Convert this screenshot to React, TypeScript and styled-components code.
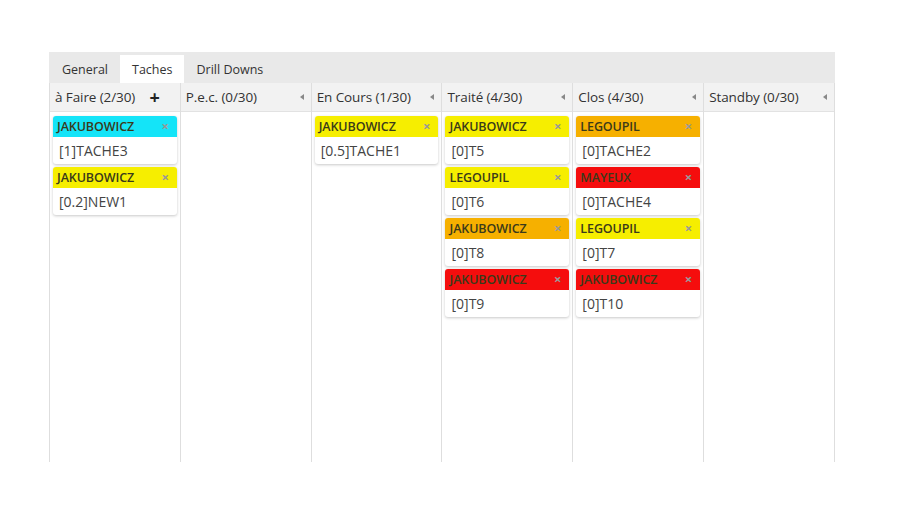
import React from 'react';
import styled, { createGlobalStyle } from 'styled-components';

type Card = { who: string; color: string; task: string };
type Column = { title: string; action: 'add' | 'collapse'; cards: Card[] };

const CYAN = '#14e4f8';
const YELLOW = '#f6ee00';
const ORANGE = '#f6b000';
const RED = '#f50d0d';

const columns: Column[] = [
  {
    title: 'à Faire (2/30)',
    action: 'add',
    cards: [
      { who: 'JAKUBOWICZ', color: CYAN, task: '[1]TACHE3' },
      { who: 'JAKUBOWICZ', color: YELLOW, task: '[0.2]NEW1' },
    ],
  },
  { title: 'P.e.c. (0/30)', action: 'collapse', cards: [] },
  {
    title: 'En Cours (1/30)',
    action: 'collapse',
    cards: [{ who: 'JAKUBOWICZ', color: YELLOW, task: '[0.5]TACHE1' }],
  },
  {
    title: 'Traité (4/30)',
    action: 'collapse',
    cards: [
      { who: 'JAKUBOWICZ', color: YELLOW, task: '[0]T5' },
      { who: 'LEGOUPIL', color: YELLOW, task: '[0]T6' },
      { who: 'JAKUBOWICZ', color: ORANGE, task: '[0]T8' },
      { who: 'JAKUBOWICZ', color: RED, task: '[0]T9' },
    ],
  },
  {
    title: 'Clos (4/30)',
    action: 'collapse',
    cards: [
      { who: 'LEGOUPIL', color: ORANGE, task: '[0]TACHE2' },
      { who: 'MAYEUX', color: RED, task: '[0]TACHE4' },
      { who: 'LEGOUPIL', color: YELLOW, task: '[0]T7' },
      { who: 'JAKUBOWICZ', color: RED, task: '[0]T10' },
    ],
  },
  { title: 'Standby (0/30)', action: 'collapse', cards: [] },
];

const tabs = ['General', 'Taches', 'Drill Downs'];

export default function App() {
  return (
    <>
      <GlobalStyle />
      <Board>
        <TabBar>
          {tabs.map((t) => (
            <Tab key={t} $active={t === 'Taches'}>
              {t}
            </Tab>
          ))}
        </TabBar>
        <Columns>
          {columns.map((col) => (
            <Lane key={col.title}>
              <LaneHeader>
                <LaneTitle>{col.title}</LaneTitle>
                {col.action === 'add' ? <AddIcon>+</AddIcon> : <CollapseIcon />}
              </LaneHeader>
              <LaneBody>
                {col.cards.map((c, i) => (
                  <TaskCard key={i}>
                    <CardHead $color={c.color}>
                      <Owner>{c.who}</Owner>
                      <Close>×</Close>
                    </CardHead>
                    <CardBody>{c.task}</CardBody>
                  </TaskCard>
                ))}
              </LaneBody>
            </Lane>
          ))}
        </Columns>
      </Board>
    </>
  );
}

const GlobalStyle = createGlobalStyle`
  html, body {
    margin: 0;
    background: #ffffff;
  }
  body {
    font-family: 'Open Sans', 'DejaVu Sans', sans-serif;
    color: #333;
  }
`;

const Board = styled.div`
  width: 786px;
  margin: 52px 0 0 49px;
  display: flex;
  flex-direction: column;
`;

const TabBar = styled.div`
  display: flex;
  height: 31px;
  background: #e9e9e9;
  padding: 3px 0 0 1px;
  box-sizing: border-box;
  align-items: stretch;
`;

const Tab = styled.div<{ $active?: boolean }>`
  display: flex;
  align-items: center;
  padding: 0 12px;
  font-size: 12.5px;
  color: #333;
  background: ${({ $active }) => ($active ? '#ffffff' : 'transparent')};
`;

const Columns = styled.div`
  display: grid;
  grid-template-columns: repeat(6, 1fr);
  height: 379px;
  border-left: 1px solid #dedede;
`;

const Lane = styled.div`
  display: flex;
  flex-direction: column;
  border-right: 1px solid #dedede;
  min-width: 0;
`;

const LaneHeader = styled.div`
  height: 29px;
  display: flex;
  align-items: center;
  justify-content: space-between;
  padding: 0 7px 0 5px;
  background: #f2f2f2;
  border-bottom: 1px solid #e2e2e2;
  box-sizing: border-box;
`;

const LaneTitle = styled.span`
  font-size: 13.5px;
  color: #333;
  white-space: nowrap;
  letter-spacing: -0.1px;
`;

const AddIcon = styled.span`
  font-size: 18px;
  font-weight: 700;
  line-height: 1;
  color: #222;
  margin-right: 13px;
`;

const CollapseIcon = styled.span`
  width: 0;
  height: 0;
  border-top: 3px solid transparent;
  border-bottom: 3px solid transparent;
  border-right: 4px solid #888;
`;

const LaneBody = styled.div`
  flex: 1;
  background: #fff;
  padding: 4px 3px 0 3px;
  display: flex;
  flex-direction: column;
  gap: 3px;
`;

const TaskCard = styled.div`
  display: flex;
  flex-direction: column;
  background: #fff;
  border-radius: 3px;
  box-shadow: 0 1px 3px rgba(0, 0, 0, 0.22);
`;

const CardHead = styled.div<{ $color: string }>`
  height: 21px;
  display: flex;
  align-items: center;
  justify-content: space-between;
  padding: 0 8px 0 4px;
  background: ${({ $color }) => $color};
  border-radius: 3px 3px 0 0;
`;

const Owner = styled.span`
  font-size: 12.5px;
  font-weight: 600;
  color: #3a3a1a;
  letter-spacing: -0.1px;
`;

const Close = styled.span`
  font-size: 13px;
  font-weight: 700;
  color: #999;
  line-height: 1;
`;

const CardBody = styled.div`
  height: 27px;
  display: flex;
  align-items: center;
  padding: 0 6px;
  font-size: 14px;
  color: #444;
`;
